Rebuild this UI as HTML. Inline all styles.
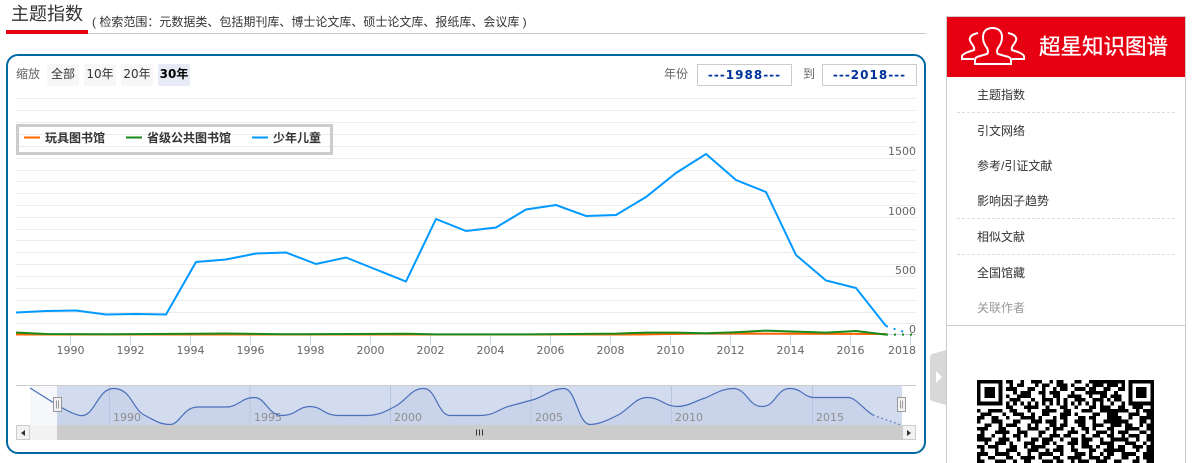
<!DOCTYPE html>
<html lang="zh"><head><meta charset="utf-8"><title>主题指数</title>
<style>
html,body{margin:0;padding:0;background:#fff}
body{width:1197px;height:463px;position:relative;overflow:hidden;font-family:"Liberation Sans","Noto Sans CJK SC",sans-serif;font-size:12px;color:#333}
.a{position:absolute;white-space:nowrap}
.btn{position:absolute;top:64px;width:32px;height:22px;line-height:20px;text-align:center;background:#f7f7f7;border-radius:2px;color:#333;font-family:"DejaVu Sans","Noto Sans CJK SC",sans-serif}
.inp{position:absolute;top:64px;width:93px;height:20px;line-height:20px;border:1px solid #ccc;text-align:center;font-weight:bold;color:#039;font-size:12px;letter-spacing:1px;font-family:"DejaVu Sans",sans-serif}
.m{position:absolute;left:977px;line-height:18px;color:#333;white-space:nowrap}
.d{position:absolute;left:957px;width:218px;border-top:1px dashed #ddd}
svg{position:absolute;left:0;top:0}
</style></head><body>
<div class="a" style="left:11px;top:2px;font-size:18px;line-height:24px;color:#333">主题指数</div>
<div class="a" style="left:92px;top:13px;line-height:18px;color:#333">( 检索范围：元数据类、包括期刊库、博士论文库、硕士论文库、报纸库、会议库 )</div>
<div class="a" style="left:6px;top:33px;width:920px;height:1px;background:#ccc"></div>
<div class="a" style="left:6px;top:30px;width:82px;height:4px;background:#e60012"></div>
<div class="a" style="left:6px;top:54px;width:916px;height:396px;border:2px solid #0068a3;border-radius:12px"></div>

<svg width="1197" height="463" viewBox="0 0 1197 463" font-family="'DejaVu Sans',sans-serif" font-size="11">
<g stroke="#ececec" stroke-width="1">
<path d="M16 98.5H916M16 110.5H916M16 122.5H916M16 134.5H916M16 146.5H916M16 158.5H916M16 170.5H916M16 181.5H916M16 193.5H916M16 205.5H916M16 217.5H916M16 229.5H916M16 240.5H916M16 252.5H916M16 264.5H916M16 276.5H916M16 288.5H916M16 300.5H916M16 312.5H916M16 323.5H916"/>
</g>
<path d="M16 334.5H916" stroke="#ccd6eb"/>
<path d="M70.5 335v10M130.5 335v10M190.5 335v10M250.5 335v10M310.5 335v10M370.5 335v10M430.5 335v10M490.5 335v10M550.5 335v10M610.5 335v10M670.5 335v10M730.5 335v10M790.5 335v10M850.5 335v10M910.5 335v10" stroke="#ccd6eb" fill="none"/>
<g fill="#666" text-anchor="middle">
<text x="70.5" y="354">1990</text><text x="130.5" y="354">1992</text><text x="190.5" y="354">1994</text><text x="250.5" y="354">1996</text><text x="310.5" y="354">1998</text><text x="370.5" y="354">2000</text><text x="430.5" y="354">2002</text><text x="490.5" y="354">2004</text><text x="550.5" y="354">2006</text><text x="610.5" y="354">2008</text><text x="670.5" y="354">2010</text><text x="730.5" y="354">2012</text><text x="790.5" y="354">2014</text><text x="850.5" y="354">2016</text><text x="902" y="354">2018</text>
</g>
<g fill="#666" text-anchor="end">
<text x="916" y="155">1500</text><text x="916" y="215">1000</text><text x="916" y="274">500</text><text x="916" y="333">0</text>
</g>
<path d="M16 334.5H640L700 333.5L886 334" fill="none" stroke="#f60" stroke-width="2"/>
<path d="M16 332.5L46 334L106 334.3L196 333.8L226 333.5L286 334.2L406 333.8L436 334.4L526 334.4L616 333.6L646 332.6L676 332.6L706 333.2L736 332.2L766 330.6L796 331.6L826 332.6L856 331L886 334.6" fill="none" stroke="#1a8a1a" stroke-width="2"/>
<path d="M886 334.6L916 334.6" fill="none" stroke="#1a8a1a" stroke-width="2" stroke-dasharray="2 6"/>
<path d="M16 312.5L46 311L76 310.5L106 314.5L136 314L166 314.5L196 262L226 259.5L256 253.5L286 252.5L316 264L346 257.5L376 269.5L406 281.5L436 219L466 231L496 227.5L526 209.5L556 205L586 216L616 215L646 197L676 173L706 154L736 180L766 192L796 255L826 280.5L856 288L886 326" fill="none" stroke="#09f" stroke-width="2" stroke-linejoin="miter"/>
<path d="M886 326L893 328.5L901 331L909 333" fill="none" stroke="#09f" stroke-width="2" stroke-dasharray="2 6"/>

<!-- legend -->
<rect x="17.5" y="125.5" width="314" height="28" fill="none" stroke="#ccc" stroke-width="3"/>
<path d="M24 137.5H40" stroke="#f60" stroke-width="2"/>
<path d="M126 137.5H142" stroke="#1a8a1a" stroke-width="2"/>
<path d="M252 137.5H268" stroke="#09f" stroke-width="2"/>

<!-- navigator -->
<rect x="30" y="385" width="27" height="40" fill="#f6f7fb"/>
<rect x="57" y="385" width="845" height="40" fill="#d3dbee"/>
<path d="M57 405L80 415.5C95 418 97 388 114 388.5C132 389 132 410 146 416C154 420 160 424.5 170 424.5C180 424.5 183 407 198 407L226 407C238 407 242 397.5 254 397.5C266 397.5 268 415.5 282 415.5C296 415.5 298 406.5 310 406.5C322 406.5 324 415.5 338 415.5L366 415.5C380 415.5 388 410 394 407C408 400 410 388.5 424 388.5C436 388.5 438 415.5 450 415.5L480 415.5C495 415.5 498 409 510 406L534 399.5C545 396 552 388.5 564 388.5C576 388.5 578 424.5 590 424.5C600 424.5 610 419 620 414C632 406 636 397.5 648 397.5C660 397.5 665 406.5 677 406.5C688 406.5 695 401 705 398C715 394 722 388.5 733 388.5C747 388.5 748 406.5 762 406.5C776 406.5 776 388.5 790 388.5C802 388.5 804 397.5 814 397.5L848 397.5C856 397.5 864 410 873 415L901 425L57 425Z" fill="#c9d4ea"/>
<path d="M16 385.5H916" stroke="#ccc"/>
<path d="M109.5 386V425M250 386V425M390.5 386V425M531 386V425M671.5 386V425M812.5 386V425" stroke="#bac6de"/>
<g fill="#8f8f8f" text-anchor="start">
<text x="113" y="421">1990</text><text x="254" y="421">1995</text><text x="394" y="421">2000</text><text x="535" y="421">2005</text><text x="675" y="421">2010</text><text x="816" y="421">2015</text>
</g>
<path d="M30 388L54 403C62 408 72 414 80 415.5C95 418 97 388 114 388.5C132 389 132 410 146 416C154 420 160 424.5 170 424.5C180 424.5 183 407 198 407L226 407C238 407 242 397.5 254 397.5C266 397.5 268 415.5 282 415.5C296 415.5 298 406.5 310 406.5C322 406.5 324 415.5 338 415.5L366 415.5C380 415.5 388 410 394 407C408 400 410 388.5 424 388.5C436 388.5 438 415.5 450 415.5L480 415.5C495 415.5 498 409 510 406L534 399.5C545 396 552 388.5 564 388.5C576 388.5 578 424.5 590 424.5C600 424.5 610 419 620 414C632 406 636 397.5 648 397.5C660 397.5 665 406.5 677 406.5C688 406.5 695 401 705 398C715 394 722 388.5 733 388.5C747 388.5 748 406.5 762 406.5C776 406.5 776 388.5 790 388.5C802 388.5 804 397.5 814 397.5L848 397.5C856 397.5 864 410 873 415" fill="none" stroke="#4a6fbb" stroke-width="1.2"/>
<path d="M873 415L901 425" fill="none" stroke="#4a6fbb" stroke-width="1.2" stroke-dasharray="1.5 3"/>
<!-- handles -->
<rect x="53.5" y="397.5" width="8" height="14" fill="#f2f2f2" stroke="#999"/>
<path d="M56.5 400.5v8M58.5 400.5v8" stroke="#999"/>
<rect x="897.5" y="397.5" width="8" height="14" fill="#f2f2f2" stroke="#999"/>
<path d="M900.5 400.5v8M902.5 400.5v8" stroke="#999"/>
<!-- scrollbar -->
<rect x="16" y="425" width="900" height="15" fill="#f2f2f2"/>
<rect x="57" y="425" width="845" height="15" fill="#ccc"/>
<rect x="16.5" y="425.5" width="13" height="14" fill="#f2f2f2" stroke="#ccc"/>
<rect x="902.5" y="425.5" width="13" height="14" fill="#f2f2f2" stroke="#ccc"/>
<path d="M25 430V436L21 433Z" fill="#333"/>
<path d="M907 430V436L911 433Z" fill="#333"/>
<path d="M476.5 429.5v6M479.5 429.5v6M482.5 429.5v6" stroke="#333"/>

<!-- right panel -->
<path d="M946.5 16V463M1185.5 16V463M946 16.5H1186M947 325.5H1185" stroke="#ccc" fill="none"/>
<rect x="947" y="17" width="238" height="60" fill="#e60012"/>
<g fill="none" stroke="#fff" stroke-width="2">
<path d="M975 64V60Q975 57 980 56L987 54Q989 52 987 48Q983 43 983 37C983 31 987 28 992.5 28C998 28 1002 31 1002 37Q1002 43 998 48Q996 52 998 54L1005 56Q1011 57 1011 60V64Z"/>
<path d="M974 59H962V56Q963 54 968 52L974 50Q975 48 972 44Q969 40 970 38C971 35 974 34 978 33"/>
<path d="M1012 59H1024V56Q1023 54 1018 52L1012 50Q1011 48 1014 44Q1017 40 1016 38C1015 35 1012 34 1008 33"/>
</g>
<path d="M946 350L932 354Q930 355 930 358V398Q930 400 932 401L946 405Z" fill="#d8d8d8"/>
<path d="M936 371V383L942 377Z" fill="#fff"/>
</svg>

<div class="a" style="left:16px;top:65px;line-height:18px;color:#666">缩放</div>
<div class="btn" style="left:47px">全部</div>
<div class="btn" style="left:84px">10年</div>
<div class="btn" style="left:121px">20年</div>
<div class="btn" style="left:158px;background:#e6ebf5;font-weight:bold;color:#000">30年</div>
<div class="a" style="left:664px;top:65px;line-height:18px;color:#666">年份</div>
<div class="inp" style="left:697px">---1988---</div>
<div class="a" style="left:803px;top:65px;line-height:18px;color:#666">到</div>
<div class="inp" style="left:822px">---2018---</div>

<div class="a" style="left:45px;top:129px;line-height:18px;font-weight:bold;color:#333">玩具图书馆</div>
<div class="a" style="left:147px;top:129px;line-height:18px;font-weight:bold;color:#333">省级公共图书馆</div>
<div class="a" style="left:273px;top:129px;line-height:18px;font-weight:bold;color:#333">少年儿童</div>

<div class="a" style="left:1039px;top:32px;font-size:21.5px;line-height:30px;color:#fff;font-weight:400;-webkit-text-stroke:.3px #fff">超星知识图谱</div>
<div class="m" style="top:86px">主题指数</div>
<div class="d" style="top:112px"></div>
<div class="m" style="top:122px">引文网络</div>
<div class="m" style="top:157px">参考/引证文献</div>
<div class="m" style="top:192px">影响因子趋势</div>
<div class="d" style="top:218px"></div>
<div class="m" style="top:228px">相似文献</div>
<div class="d" style="top:254px"></div>
<div class="m" style="top:264px">全国馆藏</div>
<div class="m" style="top:299px;color:#999">关联作者</div>

<svg style="left:977px;top:380px" width="177" height="83" viewBox="0 0 49 23" shape-rendering="crispEdges">
<path d="M0 0h7v7h-7zM1 1v5h5v-5zM2 2h3v3h-3zM42 0h7v7h-7zM43 1v5h5v-5zM44 2h3v3h-3z" fill="#000" fill-rule="evenodd"/>
<path fill="none" stroke="#000" d="M8 .5h2m2 0h1m2 0h3m2 0h1m1 0h2m3 0h2m2 0h3m2 0h2M9 1.5h1m1 0h2m3 0h1m1 0h2m2 0h3m1 0h1m3 0h1m1 0h3M8 2.5h3m3 0h2m2 0h1m2 0h1m1 0h2m2 0h3m1 0h2m2 0h1M10 3.5h1m1 0h3m2 0h2m1 0h3m3 0h1m3 0h3m1 0h2M8 4.5h1m2 0h4m3 0h1m2 0h2m2 0h4m2 0h1m2 0h2M9 5.5h3m3 0h1m2 0h3m1 0h1m1 0h1m2 0h3m2 0h3m1 0h1M8 6.5h1m1 0h1m1 0h1m1 0h1m1 0h1m1 0h1m1 0h1m1 0h1m1 0h1m1 0h1m1 0h1m1 0h1m1 0h1M8 7.5h2m3 0h4m2 0h1m3 0h2m2 0h1m3 0h2m2 0h2M0 8.5h1m2 0h4m2 0h2m3 0h1m3 0h4m2 0h2m3 0h3m2 0h3m1 0h2M1 9.5h3m3 0h1m2 0h3m2 0h1m2 0h2m3 0h3m1 0h1m4 0h2m2 0h3M0 10.5h2m2 0h2m2 0h1m3 0h4m1 0h1m3 0h1m1 0h2m3 0h2m1 0h2m3 0h1m1 0h2M0 11.5h1m3 0h3m3 0h2m3 0h3m1 0h3m2 0h1m2 0h3m2 0h1m2 0h4M2 12.5h2m2 0h1m1 0h3m3 0h1m1 0h1m3 0h2m1 0h2m3 0h2m2 0h3m2 0h1M0 13.5h3m3 0h2m3 0h1m2 0h3m2 0h1m1 0h3m2 0h1m2 0h2m1 0h1m3 0h2M1 14.5h1m3 0h4m2 0h3m3 0h2m2 0h1m3 0h3m2 0h1m2 0h3m1 0h1M0 15.5h2m2 0h1m2 0h1m2 0h2m1 0h1m3 0h1m2 0h3m1 0h2m3 0h1m2 0h2m2 0h2M0 16.5h4m2 0h3m2 0h1m3 0h2m1 0h3m2 0h1m2 0h2m1 0h3m2 0h1m2 0h1M2 17.5h1m2 0h3m1 0h1m3 0h3m2 0h2m1 0h1m3 0h3m1 0h2m3 0h3M0 18.5h2m1 0h3m3 0h2m2 0h1m1 0h4m3 0h2m2 0h1m2 0h3m1 0h1m2 0h2M1 19.5h1m3 0h1m2 0h3m3 0h3m2 0h1m1 0h3m2 0h2m3 0h2m2 0h3M0 20.5h3m2 0h4m2 0h1m2 0h1m2 0h4m2 0h1m3 0h3m1 0h1m2 0h1m1 0h1M0 21.5h1m2 0h2m3 0h2m2 0h4m1 0h1m3 0h2m2 0h4m2 0h3m1 0h2M0 22.5h2m3 0h3m2 0h1m2 0h2m3 0h3m1 0h2m2 0h1m1 0h3m2 0h3"/>
<path fill="none" stroke="#000" d="M34 .5h2m2 0h3M33 1.5h1m2 0h3m1 0h1M35 2.5h2m2 0h2M33 3.5h3m2 0h1M34 4.5h1m2 0h3M33 5.5h2m3 0h2M34 6.5h1m2 0h1m2 0h1M34 7.5h3m2 0h2m2 0h3m2 0h1M36 8.5h2m2 0h2m2 0h1m1 0h4M38 9.5h1m3 0h3m2 0h2M37 10.5h3m2 0h1m2 0h4M36 11.5h1m2 0h3m3 0h2m1 0h1M38 12.5h2m1 0h2m2 0h1m1 0h3M37 13.5h1m3 0h4m2 0h2M39 14.5h3m3 0h2m1 0h1M36 15.5h2m2 0h1m1 0h3m2 0h3M38 16.5h4m2 0h1m2 0h2M37 17.5h1m3 0h3m2 0h1m1 0h1M39 18.5h2m2 0h3m1 0h2M38 19.5h3m3 0h1m2 0h2M37 20.5h1m2 0h4m2 0h3M40 21.5h2m2 0h1m1 0h3M38 22.5h2m3 0h2m2 0h2"/>
</svg>
</body></html>
